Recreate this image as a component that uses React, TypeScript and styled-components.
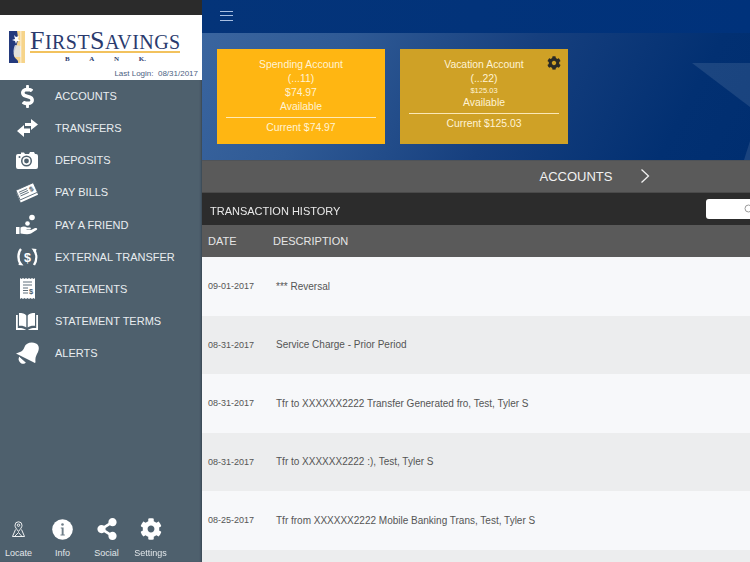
import React from "react";
import styled, { createGlobalStyle } from "styled-components";
import { FaDollarSign, FaCog, FaShareAlt } from "react-icons/fa";

const Global = createGlobalStyle`
  html, body { margin: 0; padding: 0; width: 750px; height: 562px; overflow: hidden; }
  body { font-family: "Liberation Sans", Arial, sans-serif; background: #fff; }
  * { box-sizing: border-box; }
`;

const Page = styled.div`
  width: 750px; height: 562px; display: flex; overflow: hidden; filter: blur(0.35px);
`;
const Sidebar = styled.aside`
  width: 202px; flex: none; height: 562px; display: flex; flex-direction: column;
  background: #4e606d; box-shadow: inset -2px 0 2px -1px rgba(30,40,50,.45);
`;
const TopStrip = styled.div`height: 15px; background: #2b2b2b; flex: none;`;
const LogoPanel = styled.div`
  height: 65px; flex: none; background: #fff; padding: 16px 4px 0 9px; display: flex; flex-direction: column;
`;
const LogoRow = styled.div`display: flex; align-items: flex-start; gap: 5px; height: 37px;`;
const LogoWords = styled.div`display: flex; flex-direction: column; width: 150px;`;
const LogoName = styled.div`
  font-family: "Liberation Serif", "Times New Roman", serif; font-size: 20px; line-height: 20px; color: #2a3a6e;
  white-space: nowrap; border-bottom: 2px solid #f2c25e; height: 22px; letter-spacing: .45px;
`;
const LogoCap = styled.span`font-size: 26px;`;
const LogoBank = styled.div`
  font-family: "Liberation Serif", serif; font-weight: bold; font-size: 7px; color: #2a3a6e;
  display: flex; justify-content: space-between; padding: 2px 34px 0 35px; line-height: 8px;
`;
const LastLogin = styled.div`
  font-size: 8px; color: #4c6282; text-align: right; white-space: pre; line-height: 9px; margin-top: 1px;
`;
const Menu = styled.nav`display: flex; flex-direction: column; flex: 1;`;
const MenuItem = styled.div`
  height: 32.15px; display: flex; align-items: center; font-size: 11px; color: #e9edf0; flex: none;
`;
const MenuIcon = styled.span`
  width: 55px; height: 100%; flex: none; display: flex; align-items: center; justify-content: center;
  padding-right: 1px; color: #fff;
`;
const Footer = styled.div`
  display: flex; padding: 0 0 4px 0; height: 52px; flex: none;
`;
const FooterItem = styled.div`
  width: 44px; display: flex; flex-direction: column; align-items: center; justify-content: space-between;
  font-size: 9px; color: #e2e7ea; height: 100%;
  &:first-child { margin-left: -3.5px; }
`;
const FooterIcon = styled.span`height: 28px; margin-top: 5px; display: flex; align-items: center; justify-content: center; color: #fff;`;

const Main = styled.main`flex: 1; min-width: 0; display: flex; flex-direction: column; height: 562px;`;
const Header = styled.header`
  height: 33px; flex: none; background: linear-gradient(90deg,#043479,#00327b); display: flex; align-items: center; padding: 0 0 2px 18px;
`;
const Burger = styled.div`
  width: 13px; height: 10px; display: flex; flex-direction: column; justify-content: space-between;
  & > i { display: block; height: 1px; background: #a9c0e2; }
`;
const Hero = styled.section`
  position: relative; height: 127px; flex: none; padding: 16px 15px; display: flex; gap: 15px; overflow: hidden;
  background: linear-gradient(118deg,#3a659f 0%,#2f5a95 24%,#163f7e 55%,#023072 85%,#002e70 100%);
`;
const Decor = styled.svg`position: absolute; inset: 0; width: 548px; height: 127px;`;
const Card = styled.div<{ $muted?: boolean }>`
  position: relative; width: 168px; height: 95px; padding-top: 9px; text-align: center; color: #fff3d4;
  background: ${p => (p.$muted ? "#cfa126" : "#ffb612")}; font-size: 10.4px; line-height: 14px;
`;
const Small = styled.div`font-size: 7.5px; line-height: 10px;`;
const Rule = styled.div`height: 1px; background: #fff0c8; margin: 3px 9px 3px; opacity: .9;`;
const Gear = styled.span`position: absolute; top: 7px; right: 7px; color: #2a2a26; display: flex;`;
const AccountsBar = styled.div`
  position: relative; height: 32px; flex: none; background: #5a5a5a; color: #f1f1f1; font-size: 13px;
  display: flex; align-items: center; justify-content: center; padding-left: 200px; border-top: 1px solid #4f5358;
`;
const Chevron = styled.svg`position: absolute; left: 438px; top: 7px;`;
const HistoryBar = styled.div`
  height: 33px; flex: none; background: #2c2c2c; color: #e9e9e9; font-size: 11px; display: flex; align-items: center;
  justify-content: space-between; padding: 3px 0 0 8px; border-top: 1px solid #4a4a4a;
`;
const Search = styled.div`
  width: 46px; height: 20px; margin-top: -3px; background: #fff; border-radius: 3px 0 0 3px; margin-right: -2px; display: flex; align-items: center;
  padding-left: 38px; overflow: hidden; flex: none;
`;
const Columns = styled.div`
  height: 32px; flex: none; background: #5a5a5a; color: #e6e6e6; font-size: 11px; display: flex; align-items: center; padding-left: 6px;
`;
const DateHead = styled.span`width: 65px;`;
const Rows = styled.div`flex: 1; display: flex; flex-direction: column;`;
const Row = styled.div<{ $alt?: boolean }>`
  height: 58.5px; flex: none; display: flex; align-items: center; padding-left: 6px; color: #555;
  background: ${p => (p.$alt ? "#ecedee" : "#f7f8fa")};
`;
const RowDate = styled.span`width: 68px; font-size: 9px; flex: none;`;
const RowText = styled.span`font-size: 10px;`;

const Transfers = () => (
  <svg width="23" height="20" viewBox="0 0 23 20" fill="#fff"><path d="M9 5h6V1l7 5.5-7 5.500V8H9z" /><path d="M14 10.500H8V7l-7 6 7 6v-4h6z" /></svg>
);
const Camera = () => (
  <svg width="22" height="18" viewBox="0 0 22 18"><path fill="#fff" d="M2 3h3V1.500h3L9 3h4l1-2h4l1 2h1a2 2 0 0 1 2 2v11a2 2 0 0 1-2 2H2a2 2 0 0 1-2-2V5a2 2 0 0 1 2-2z" /><circle cx="10.500" cy="10" r="5.500" fill="#4e606d" /><circle cx="10.500" cy="10" r="4" fill="#fff" /><circle cx="10.500" cy="10" r="2.400" fill="#4e606d" /><circle cx="3.500" cy="6" r="1" fill="#4e606d" /></svg>
);
const Bills = () => (
  <svg width="22" height="22" viewBox="0 0 22 22"><g transform="rotate(-24 11 11)"><rect x="1" y="8" width="19" height="10" fill="#fff" /><rect x="1.500" y="5" width="19" height="10.500" fill="#fff" stroke="#4e606d" strokeWidth=".8" /><path d="M3.500 8h9M3.500 10h9M3.500 12h9" stroke="#4e606d" strokeWidth=".8" /><text x="14.200" y="12.500" fontSize="7" fontFamily="Liberation Sans" fontWeight="bold" fill="#4e606d">$</text></g></svg>
);
const Friend = () => (
  <svg width="22" height="22" viewBox="0 0 22 22" fill="#fff"><circle cx="16" cy="3.500" r="2.800" /><circle cx="11.500" cy="9.500" r="2.300" /><path d="M0 13h3.500v7H0zM4.500 13.500c3-1.500 5-1 6.500 0h3c1.200 0 1.200 2 0 2h-3.500v.6H15l4-2c2-.8 3 .8 1.500 2L15 19.500c-3 1.200-6.500.5-10.500 0z" /></svg>
);
const External = () => (
  <svg width="23" height="20" viewBox="0 0 23 20" fill="none" stroke="#fff"><path d="M5 2C2 5 1.500 13 4.500 17" strokeWidth="2.400" /><path d="M18 3c3 4 3 10 0 15" strokeWidth="2.400" /><path d="M15.500 1.500l5 .5-1 4.500zM7.500 18.500l-5-.5 1-4.500z" fill="#fff" stroke="none" /><text x="11.500" y="14.500" textAnchor="middle" fontSize="12.500" fontFamily="Liberation Sans" fontWeight="bold" fill="#fff" stroke="none">$</text></svg>
);
const Statements = () => (
  <svg width="15" height="21" viewBox="0 0 15 21"><path fill="#fff" d="M0 0l1.500 1L3 0l1.500 1L6 0l1.500 1L9 0l1.500 1L12 0l1.500 1L15 0v21l-1.500-1-1.500 1-1.500-1L9 21l-1.500-1L6 21l-1.500-1L3 21l-1.500-1L0 21z" /><path d="M3 4h9M3 7h9M3 10h5M3 12.500h5M3 15h5" stroke="#4e606d" strokeWidth=".9" /><text x="11" y="16" textAnchor="middle" fontSize="7.500" fontFamily="Liberation Sans" fontWeight="bold" fill="#4e606d">$</text></svg>
);
const Book = () => (
  <svg width="22" height="17" viewBox="0 0 22 17" fill="#fff"><path d="M0 2v15h10.300c-2-1.600-5-2.200-8.500-2V2z" /><path d="M22 2v15H11.700c2-1.600 5-2.200 8.500-2V2z" /><path d="M3 0c3 0 6 .6 7.300 2.500v12C8.500 13 6 12.500 3 12.800zM19 0c-3 0-6 .6-7.300 2.500v12c1.800-1.500 4.300-2 7.300-1.700z" /></svg>
);
const Bell = () => (
  <svg width="23" height="23" viewBox="0 0 23 23" fill="#fff"><path d="M0 11.500C4 10 7 9.500 8.500 5c1.300-4 7-5.500 11.500-3.500 3 1.500 3.500 5 2 8.500-1.800 3.800-3 5-2.500 10-.2 1-.8 1.200-1.500.6z" /><path d="M3.500 14.500l6.500 6c-1.500 1.800-4.500 1.800-6-.2-1.600-1.800-2-4-.5-5.800z" /><path d="M3.500 14.500l8 7" stroke="#4e606d" strokeWidth=".9" /></svg>
);
const Locate = () => (
  <svg width="15" height="17" viewBox="0 0 15 17" fill="none" stroke="#fff" strokeWidth=".9"><path d="M7.500 10.500C5.500 7.800 4 6.300 4 4.300a3.500 3.500 0 0 1 7 0c0 2-1.500 3.500-3.500 6.200z" /><circle cx="7.500" cy="4.200" r="1.200" /><path d="M4.500 8.500L1.500 15.500h12l-3-7M3.500 15.500l4-4 3.500 4" /></svg>
);
const Info = () => (
  <svg width="21" height="21" viewBox="0 0 21 21"><circle cx="10.500" cy="10.500" r="10.300" fill="#fff" /><circle cx="10.500" cy="5.500" r="1.300" fill="#6f7e88" /><path d="M8.800 8.500h2.800v7h1.200v1H8.500v-1h1.200v-6h-.9z" fill="#6f7e88" /></svg>
);
const SearchIcon = () => (
  <svg width="11" height="11" viewBox="0 0 11 11" fill="none" stroke="#9a9a9a" strokeWidth="1" style={{ flex: "none" }}><circle cx="4.500" cy="4.500" r="3.500" /><path d="M7 7l3 3" /></svg>
);

const menu: [string, React.ReactNode][] = [
  ["ACCOUNTS", <FaDollarSign size={23} />],
  ["TRANSFERS", <Transfers />],
  ["DEPOSITS", <Camera />],
  ["PAY BILLS", <Bills />],
  ["PAY A FRIEND", <Friend />],
  ["EXTERNAL TRANSFER", <External />],
  ["STATEMENTS", <Statements />],
  ["STATEMENT TERMS", <Book />],
  ["ALERTS", <Bell />],
];
const footer: [string, React.ReactNode][] = [
  ["Locate", <Locate />],
  ["Info", <Info />],
  ["Social", <FaShareAlt size={22} />],
  ["Settings", <FaCog size={22} />],
];
const rows: [string, string][] = [
  ["09-01-2017", "*** Reversal"],
  ["08-31-2017", "Service Charge - Prior Period"],
  ["08-31-2017", "Tfr to XXXXXX2222 Transfer Generated fro, Test, Tyler S"],
  ["08-31-2017", "Tfr to XXXXXX2222 :), Test, Tyler S"],
  ["08-25-2017", "Tfr from XXXXXX2222 Mobile Banking Trans, Test, Tyler S"],
  ["", ""],
];

export default function App() {
  return (
    <Page>
      <Global />
      <Sidebar>
        <TopStrip />
        <LogoPanel>
          <LogoRow>
            <svg width="16" height="32" viewBox="0 0 16 32" style={{ flex: "none" }}>
              <rect width="16" height="32" fill="#243a7c" />
              <path d="M8 0h8v32H9c1-3-3-4-4-7s1-6 2-9 3-7 1-16z" fill="#f6d48a" />
              <path d="M5 4l2 2 3-1-1 3 2 2-3 0-1 3-1-3-3-1 3-1z" fill="#fff" />
              <path d="M6 14c-2 4-2 9 0 12h6V15z" fill="#dfe3e8" opacity=".85" />
              <path d="M11 0h1.500v32H11z" fill="#fff" opacity=".45" />
            </svg>
            <LogoWords>
              <LogoName><LogoCap>F</LogoCap>IRST<LogoCap>S</LogoCap>AVINGS</LogoName>
              <LogoBank><span>B</span><span>A</span><span>N</span><span>K.</span></LogoBank>
            </LogoWords>
          </LogoRow>
          <LastLogin>Last Login:  08/31/2017</LastLogin>
        </LogoPanel>
        <Menu>
          {menu.map(([label, icon]) => (
            <MenuItem key={label}><MenuIcon>{icon}</MenuIcon>{label}</MenuItem>
          ))}
        </Menu>
        <Footer>
          {footer.map(([label, icon]) => (
            <FooterItem key={label}><FooterIcon>{icon}</FooterIcon>{label}</FooterItem>
          ))}
        </Footer>
      </Sidebar>
      <Main>
        <Header><Burger><i /><i /><i /></Burger></Header>
        <Hero>
          <Decor viewBox="0 0 548 127">
            <path d="M490 30H548V74z" fill="#fff" opacity=".1" />
            <path d="M542 127L548 108V127z" fill="#fff" opacity=".1" />
          </Decor>
          <Card>
            <div>Spending Account</div><div>(...11)</div><div>$74.97</div><div>Available</div>
            <Rule /><div>Current $74.97</div>
          </Card>
          <Card $muted>
            <Gear><FaCog size={14} /></Gear>
            <div>Vacation Account</div><div>(...22)</div><Small>$125.03</Small><div>Available</div>
            <Rule /><div>Current $125.03</div>
          </Card>
        </Hero>
        <AccountsBar>
          ACCOUNTS
          <Chevron width="10" height="16" viewBox="0 0 10 16" fill="none" stroke="#f1f1f1" strokeWidth="1.300"><path d="M1.500 1.500L8.500 8l-7 6.500" /></Chevron>
        </AccountsBar>
        <HistoryBar>
          TRANSACTION HISTORY
          <Search><SearchIcon /></Search>
        </HistoryBar>
        <Columns><DateHead>DATE</DateHead>DESCRIPTION</Columns>
        <Rows>
          {rows.map(([d, t], i) => (
            <Row key={i} $alt={i % 2 === 1}><RowDate>{d}</RowDate><RowText>{t}</RowText></Row>
          ))}
        </Rows>
      </Main>
    </Page>
  );
}
